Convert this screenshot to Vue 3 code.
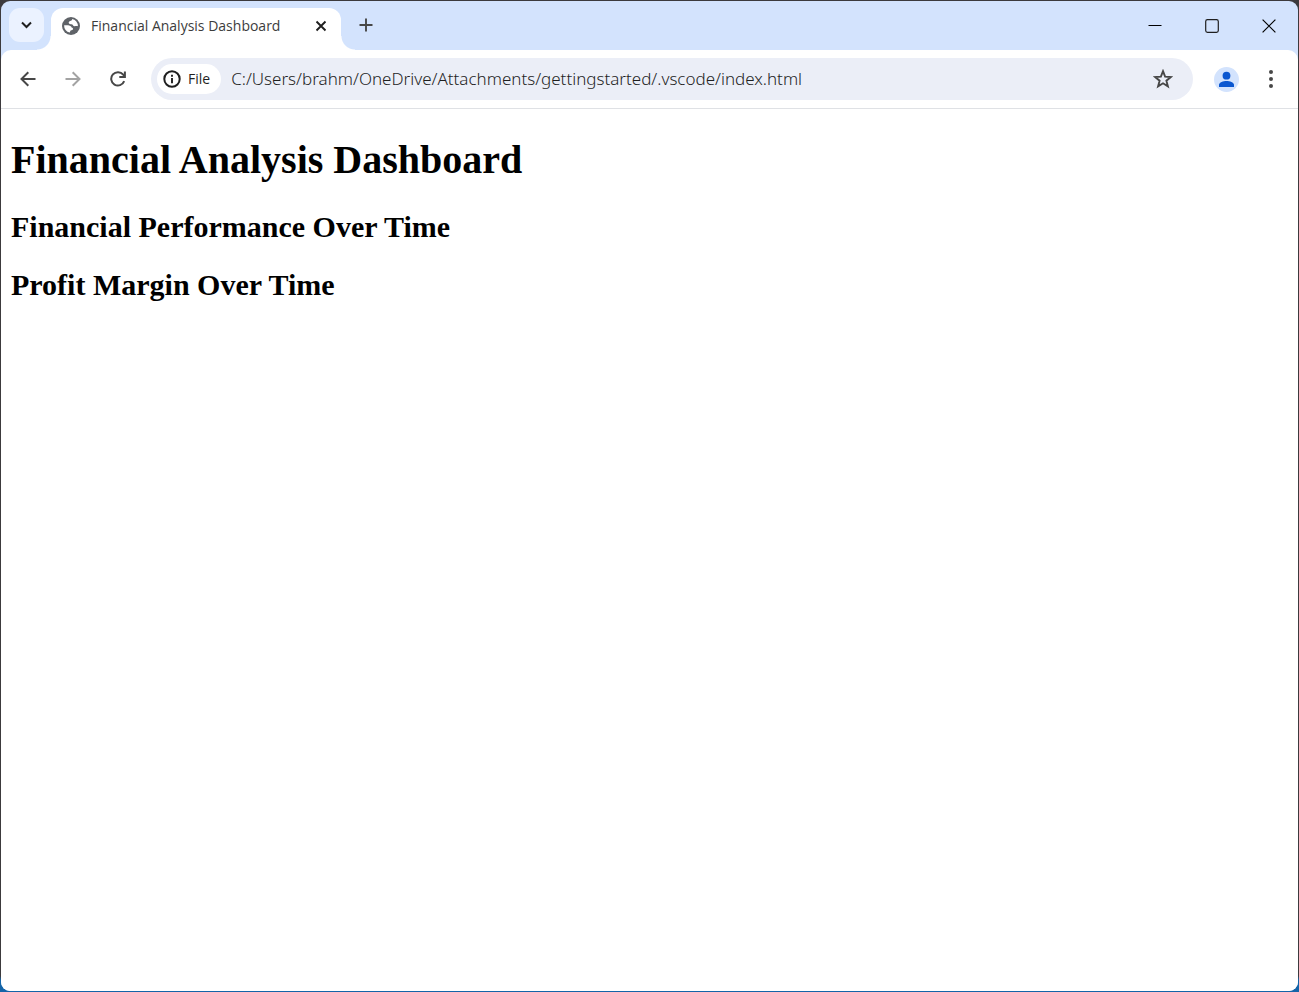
<script setup>
import { ref } from 'vue'

const title = 'Financial Analysis Dashboard'
const address = ref('C:/Users/brahm/OneDrive/Attachments/gettingstarted/.vscode/index.html')
const sections = ['Financial Performance Over Time', 'Profit Margin Over Time']
</script>

<template>
  <div class="desktop">
    <div class="window">
      <header class="tab-strip">
        <button class="tab-search" type="button" aria-label="Search tabs">
          <svg width="11" height="8" viewBox="0 0 11 8"><path d="m1 1.500 4.500 4.500L10 1.500" fill="none" stroke="#1f1f1f" stroke-width="2" /></svg>
        </button>
        <div class="tab">
          <svg class="favicon" width="18" height="18" viewBox="0 0 18 18">
            <circle cx="9" cy="9" r="9" fill="#5f6368" />
            <path d="M10 2.100C10.300 3 9.800 3.600 8.900 3.800 7.700 4 6.600 4.700 6.700 5.800c.1 1 1.100 1.500 2.300 1.400.9-.1 1.600.1 1.900.8.3.8.9 1.200 1.700 1.200 1.300 0 2.300-.3 3.300.1A7 7 0 0 0 10 2.100Z" fill="#fff" />
            <path d="M2.100 8.300c1.800-.1 4.100-.2 5.800.5 1.200.5 1.500 1 1.700 1.700.9.200 1.600.7 1.400 1.700-.2.900-1.400.9-2.200 1.200-.7.300-.5 1.300-1.100 2.100A7 7 0 0 1 2.100 8.300Z" fill="#fff" />
          </svg>
          <span class="tab-title">{{ title }}</span>
          <button class="tab-close" type="button" aria-label="Close tab">
            <svg width="12" height="12" viewBox="0 0 12 12"><path d="m1.500 1.500 9 9m0-9-9 9" stroke="#1f1f1f" stroke-width="1.900" /></svg>
          </button>
        </div>
        <button class="new-tab" type="button" aria-label="New tab">
          <svg width="14" height="14" viewBox="0 0 14 14"><path d="M7 .5v13M.5 7h13" stroke="#474747" stroke-width="1.900" /></svg>
        </button>
        <div class="window-controls">
          <button type="button" aria-label="Minimize">
            <svg width="14" height="14" viewBox="0 0 14 14"><path d="M.5 6.500h13" stroke="#000" /></svg>
          </button>
          <button type="button" aria-label="Maximize">
            <svg width="14" height="14" viewBox="0 0 14 14"><rect x=".7" y=".7" width="12.600" height="12.600" rx="1.800" fill="none" stroke="#1f1f1f" stroke-width="1.200" /></svg>
          </button>
          <button type="button" aria-label="Close">
            <svg width="14" height="14" viewBox="0 0 14 14"><path d="m.6.6 12.800 12.800m0-12.800L.6 13.400" stroke="#000" stroke-width="1.200" /></svg>
          </button>
        </div>
      </header>

      <nav class="toolbar">
        <div class="nav-buttons">
          <button type="button" aria-label="Back">
            <svg width="16" height="16" viewBox="0 0 16 16"><path d="M15.500 8H2M8.300 1.200 1.500 8l6.800 6.800" fill="none" stroke="#474747" stroke-width="2" /></svg>
          </button>
          <button type="button" aria-label="Forward" disabled>
            <svg width="16" height="16" viewBox="0 0 16 16"><path d="M.5 8H14M7.700 1.200 14.500 8l-6.800 6.800" fill="none" stroke="#a3a3a3" stroke-width="2" /></svg>
          </button>
          <button type="button" aria-label="Reload">
            <svg width="16" height="16" viewBox="0 0 16 16"><path d="M14.200 10.200A6.700 6.700 0 1 1 13.200 3.700L14.600 5.400M14.900.5v5.600H9.300" fill="none" stroke="#474747" stroke-width="2" /></svg>
          </button>
        </div>
        <div class="omnibox">
          <button class="site-chip" type="button">
            <svg width="18" height="18" viewBox="0 0 18 18"><circle cx="9" cy="9" r="7.700" fill="none" stroke="#1f1f1f" stroke-width="2" /><path d="M9 8v5.200M9 4.800v1.900" stroke="#1f1f1f" stroke-width="1.900" /></svg>
            <span>File</span>
          </button>
          <input v-model="address" class="address" type="text" aria-label="Address" spellcheck="false" />
          <button class="bookmark" type="button" aria-label="Bookmark this page">
            <svg width="20" height="20" viewBox="0 0 20 20"><path d="m10 2.200 2.100 5.400 5.800.4-4.500 3.700 1.500 5.700L10 14.300l-4.900 3.100 1.500-5.700L2.100 8l5.800-.4Z" fill="none" stroke="#474747" stroke-width="1.900" /></svg>
          </button>
        </div>
        <button class="profile" type="button" aria-label="Profile">
          <svg width="25" height="25" viewBox="0 0 25 25"><circle cx="12.500" cy="12.500" r="12.500" fill="#d3e3fd" /><circle cx="12.500" cy="8.700" r="3.900" fill="#0b57d0" /><path d="M5 20v-2.200c0-2.700 4.300-3.900 7.500-3.900s7.500 1.200 7.500 3.900V20Z" fill="#0b57d0" /></svg>
        </button>
        <button class="menu" type="button" aria-label="Menu">
          <svg width="4" height="18" viewBox="0 0 4 18"><g fill="#474747"><circle cx="2" cy="2" r="2" /><circle cx="2" cy="9" r="2" /><circle cx="2" cy="16" r="2" /></g></svg>
        </button>
      </nav>

      <main class="page">
        <h1>{{ title }}</h1>
        <h2 v-for="section in sections" :key="section">{{ section }}</h2>
      </main>
    </div>
  </div>
</template>

<style>
body {
  margin: 0;
}
</style>

<style scoped>
.desktop {
  box-sizing: border-box;
  min-height: 100vh;
  padding: 1px;
  display: flex;
  background: linear-gradient(#3c3a3d 0, #3c3a3d calc(100% - 16px), #1464a8 calc(100% - 12px));
}
.window {
  flex: 1;
  min-width: 0;
  display: flex;
  flex-direction: column;
  border-radius: 9px;
  overflow: hidden;
  background: #d3e3fd;
}
button {
  display: flex;
  align-items: center;
  justify-content: center;
  border: 0;
  padding: 0;
  background: none;
  color: #1f1f1f;
}
svg {
  display: block;
  flex: none;
}
.tab-strip {
  display: flex;
  height: 49px;
  padding-left: 8px;
  font-family: "Open Sans", "Noto Sans", sans-serif;
}
.tab-search {
  width: 35px;
  height: 34px;
  margin: 7px 7px 0 0;
  border-radius: 11px;
  background: #ebf2ff;
}
.tab {
  position: relative;
  box-sizing: border-box;
  width: 290px;
  height: 42px;
  margin-top: 7px;
  padding: 0 14px 7px 11px;
  display: flex;
  align-items: center;
  border-radius: 12px 12px 0 0;
  background: #fff;
}
.tab::before,
.tab::after {
  content: "";
  position: absolute;
  bottom: 0;
  width: 14px;
  height: 14px;
}
.tab::before {
  right: 100%;
  background: radial-gradient(circle at 0 0, transparent 13px, #fff 14px);
}
.tab::after {
  left: 100%;
  background: radial-gradient(circle at 100% 0, transparent 13px, #fff 14px);
}
.tab-title {
  flex: 1;
  margin-left: 11px;
  font-size: 14px;
  line-height: 19px;
  white-space: nowrap;
  color: #3c3c3c;
}
.new-tab {
  width: 34px;
  height: 34px;
  margin: 7px 0 0 8px;
}
.window-controls {
  margin-left: auto;
  padding-right: 1px;
  display: flex;
}
.window-controls button {
  width: 57px;
  height: 49px;
}
.toolbar {
  box-sizing: border-box;
  height: 59px;
  padding: 0 20px 0 10px;
  display: flex;
  align-items: center;
  border-bottom: 1px solid #dfe1e5;
  border-radius: 10px 10px 0 0;
  background: #fff;
}
.nav-buttons {
  display: flex;
  gap: 11px;
}
.nav-buttons button {
  width: 34px;
  height: 34px;
}
.omnibox {
  box-sizing: border-box;
  flex: 1;
  min-width: 0;
  height: 42px;
  margin: 0 21px 0 16px;
  padding: 0 20px 0 6px;
  display: flex;
  align-items: center;
  border-radius: 21px;
  background: #ebeef7;
}
.site-chip {
  height: 30px;
  padding: 0 11px 0 6px;
  gap: 7px;
  border-radius: 15px;
  background: #fff;
  font: 400 14px/20px "Open Sans", "Noto Sans", sans-serif;
}
.address {
  flex: 1;
  min-width: 0;
  margin-left: 10px;
  border: 0;
  padding: 0;
  outline: 0;
  background: none;
  color: #1f1f1f;
  font: 300 17px/26px "Noto Sans", "Open Sans", sans-serif;
}
.profile {
  margin-right: 30px;
}
.menu {
  width: 4px;
  margin-right: 5px;
}
.page {
  flex: 1;
  padding: 0 10px;
  background: #fff;
  color: #000;
  font-family: "Liberation Serif", "Times New Roman", serif;
}
h1 {
  margin: 28px 0 27px;
  font-size: 40px;
  line-height: 46px;
}
h2 {
  margin: 0 0 24px;
  font-size: 30px;
  line-height: 34px;
}
</style>
